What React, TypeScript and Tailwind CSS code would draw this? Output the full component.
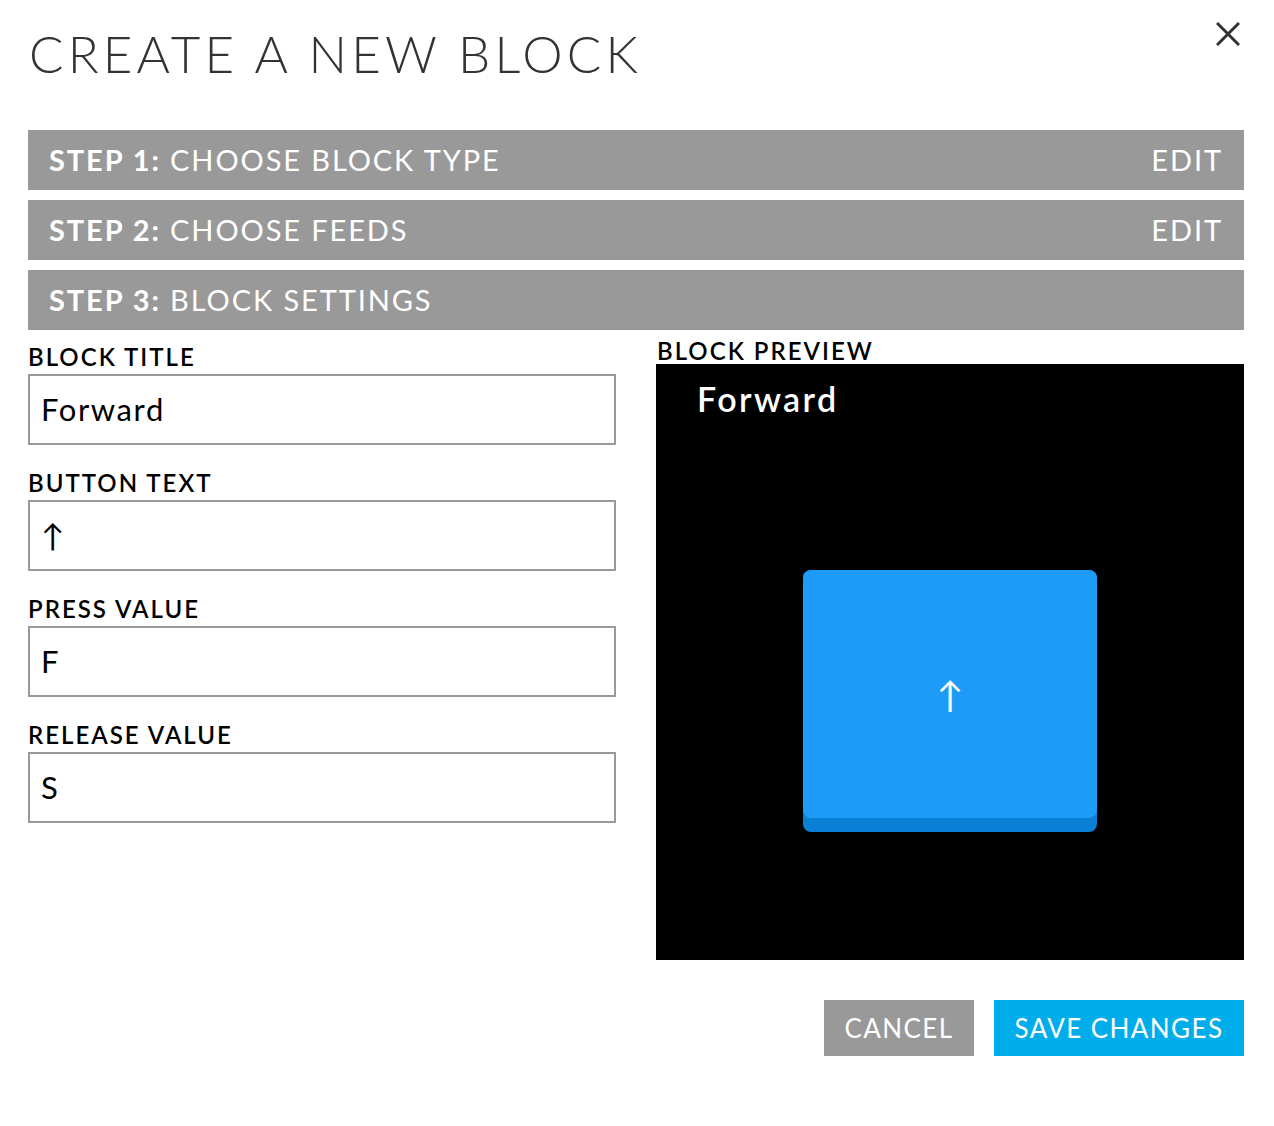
import React from "react";

const font = { fontFamily: "Lato, 'Noto Sans', sans-serif" };

function StepBar({ step, label, edit }: { step: string; label: string; edit?: boolean }) {
  return (
    <div className="flex h-[60px] items-center justify-between bg-[#999999] pb-[2px] pl-[21px] pr-[21px] text-[29px] leading-none tracking-[1.9px] text-white">
      <div>
        <span className="font-bold">{step}</span> {label}
      </div>
      {edit && <div>EDIT</div>}
    </div>
  );
}

function Field({ label, value }: { label: string; value: string }) {
  return (
    <div className="flex flex-col">
      <div className="mb-[6px] h-[22px] text-[24px] font-semibold leading-[22px] tracking-[2px] text-black">{label}</div>
      <div className="flex h-[71px] items-center border-2 border-[#9a9a9a] px-[11px] text-[31px] tracking-[1.6px] text-black">{value}</div>
    </div>
  );
}

export default function App() {
  return (
    <div className="relative min-h-[1126px] bg-white pl-[28px] pr-[30px]" style={font}>
      <button className="absolute right-[34px] top-[22px] text-[#333]">
        <svg width="24" height="24" viewBox="0 0 24 24" fill="none" stroke="#333" strokeWidth="3" strokeLinecap="butt">
          <path d="M1 1L23 23M23 1L1 23" />
        </svg>
      </button>
      <h1 className="pt-[22px] pl-[1px] text-[51px] font-light leading-[64px] tracking-[4.2px] text-[#333]">CREATE A NEW BLOCK</h1>
      <div className="mt-[44px] flex flex-col gap-[10px]">
        <StepBar step="STEP 1:" label="CHOOSE BLOCK TYPE" edit />
        <StepBar step="STEP 2:" label="CHOOSE FEEDS" edit />
        <StepBar step="STEP 3:" label="BLOCK SETTINGS" />
      </div>
      <div className="mt-[10px] grid grid-cols-[588px_588px] gap-[40px]">
        <div className="flex flex-col gap-[27px] pt-[6px]">
          <Field label="BLOCK TITLE" value="Forward" />
          <Field label="BUTTON TEXT" value="↑" />
          <Field label="PRESS VALUE" value="F" />
          <Field label="RELEASE VALUE" value="S" />
        </div>
        <div className="flex flex-col">
          <div className="mb-[2px] h-[22px] pl-[1px] text-[24px] font-semibold leading-[22px] tracking-[2px] text-black">BLOCK PREVIEW</div>
          <div className="flex h-[596px] flex-col bg-black">
            <div className="pl-[41px] pt-[15px] text-[34px] font-semibold leading-[40px] tracking-[2.4px] text-white">Forward</div>
            <div className="flex flex-1 items-center justify-center">
              <div className="mt-[22px] flex h-[262px] w-[294px] flex-col rounded-[8px] bg-[#0a7fd6]">
                <div className="flex h-[248px] items-center justify-center rounded-[8px] bg-[#1c9bf7] text-[36px] text-white">↑</div>
              </div>
            </div>
          </div>
        </div>
      </div>
      <div className="mt-[40px] flex justify-end gap-[20px]">
        <button className="h-[56px] w-[150px] bg-[#999999] text-[26px] tracking-[1.4px] text-white">CANCEL</button>
        <button className="h-[56px] w-[250px] bg-[#00adeb] text-[26px] tracking-[1.4px] text-white">SAVE CHANGES</button>
      </div>
    </div>
  );
}
